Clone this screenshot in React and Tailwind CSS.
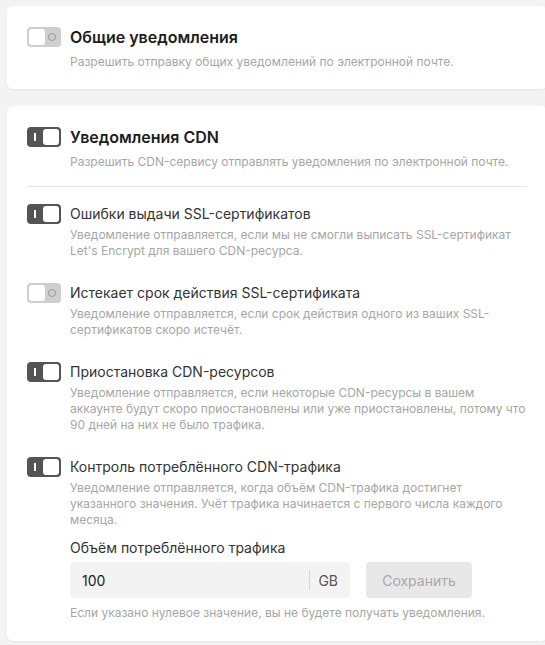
import React from "react";

function Toggle({ on }) {
  return (
    <div
      className={`relative shrink-0 w-[34px] h-[20px] rounded-[4px] ${on ? "bg-[#545454]" : "bg-[#cfcfcf]"}`}
    >
      {on ? (
        <>
          <div className="absolute left-[7px] top-[6px] w-[1.5px] h-[8px] bg-white" />
          <div className="absolute right-[2px] top-[2px] w-[16px] h-[16px] rounded-[3px] bg-white" />
        </>
      ) : (
        <>
          <div className="absolute left-[2px] top-[2px] w-[16px] h-[16px] rounded-[3px] bg-white" />
          <div className="absolute right-[5px] top-[6px] w-[8px] h-[8px] rounded-full border border-[#9a9a9a]" />
        </>
      )}
    </div>
  );
}

function Item({ on, title, desc, children }) {
  return (
    <div className="flex gap-[9px]">
      <Toggle on={on} />
      <div className="flex-1">
        <div className="text-[14px] leading-[20px] text-[#333]">{title}</div>
        <p className="mt-[3px] text-[12px] leading-[16px] text-[#a6a6a6]">{desc}</p>
        {children}
      </div>
    </div>
  );
}

export default function App() {
  return (
    <div
      className="w-[545px] h-[645px] overflow-hidden bg-[#f3f3f3] pt-[6px] pl-[7px]"
      style={{ fontFamily: "Inter, 'Noto Sans', sans-serif" }}
    >
      <div className="w-[540px] bg-white rounded-[6px] shadow-[0_1px_2px_rgba(0,0,0,0.06)] px-[20px] pt-[21px] pb-[19px]">
        <div className="flex gap-[9px]">
          <Toggle on={false} />
          <div>
            <div className="text-[16px] leading-[20px] font-semibold text-[#1c1c1c]">Общие уведомления</div>
            <p className="mt-[7px] text-[12px] leading-[16px] text-[#a6a6a6]">
              Разрешить отправку общих уведомлений по электронной почте.
            </p>
          </div>
        </div>
      </div>

      <div className="mt-[17px] w-[540px] bg-white rounded-[6px] shadow-[0_1px_2px_rgba(0,0,0,0.06)] px-[20px] pt-[21px] pb-[20px]">
        <div className="flex gap-[9px]">
          <Toggle on />
          <div>
            <div className="text-[16px] leading-[20px] font-semibold text-[#1c1c1c]">Уведомления CDN</div>
            <p className="mt-[7px] text-[12px] leading-[16px] text-[#a6a6a6]">
              Разрешить CDN-сервису отправлять уведомления по электронной почте.
            </p>
          </div>
        </div>

        <div className="mt-[16px] h-px bg-[#e3e3e3]" />

        <div className="mt-[17px] flex flex-col gap-[24px]">
          <Item
            on
            title="Ошибки выдачи SSL-сертификатов"
            desc="Уведомление отправляется, если мы не смогли выписать SSL-сертификат Let's Encrypt для вашего CDN-ресурса."
          />
          <Item
            on={false}
            title="Истекает срок действия SSL-сертификата"
            desc="Уведомление отправляется, если срок действия одного из ваших SSL-сертификатов скоро истечёт."
          />
          <Item
            on
            title="Приостановка CDN-ресурсов"
            desc="Уведомление отправляется, если некоторые CDN-ресурсы в вашем аккаунте будут скоро приостановлены или уже приостановлены, потому что 90 дней на них не было трафика."
          />
          <Item
            on
            title="Контроль потреблённого CDN-трафика"
            desc="Уведомление отправляется, когда объём CDN-трафика достигнет указанного значения. Учёт трафика начинается с первого числа каждого месяца."
          >
            <div className="mt-[10px] text-[14px] leading-[20px] text-[#333]">Объём потреблённого трафика</div>
            <div className="mt-[4px] flex gap-[16px]">
              <div className="w-[280px] h-[36px] rounded-[4px] bg-[#f3f3f3] flex items-center pl-[12px] pr-[12px]">
                <span className="flex-1 text-[14px] text-[#222]">100</span>
                <div className="w-px h-[20px] bg-[#d6d6d6] mr-[8px]" />
                <span className="text-[14px] text-[#555]">GB</span>
              </div>
              <button className="w-[106px] h-[36px] rounded-[4px] bg-[#e8e8e8] text-[14px] text-[#a8a8a8]">
                Сохранить
              </button>
            </div>
            <p className="mt-[7px] text-[12px] leading-[16px] text-[#a6a6a6]">
              Если указано нулевое значение, вы не будете получать уведомления.
            </p>
          </Item>
        </div>
      </div>
    </div>
  );
}
